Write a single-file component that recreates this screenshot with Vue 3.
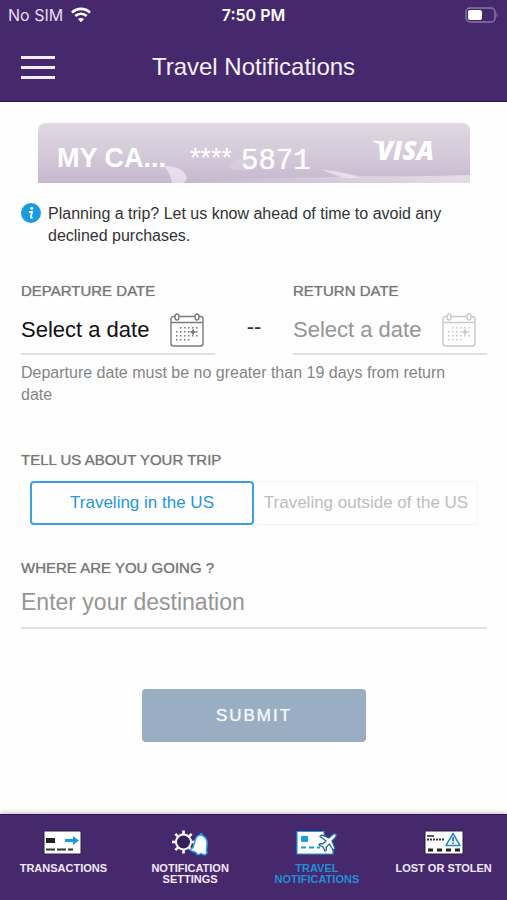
<script setup>
import { ref } from 'vue'

const scope = ref('domestic')
const departure = ref('')
const returning = ref('')
const destination = ref('')

const dots = []
for (let row = 0; row < 4; row++) {
  for (let col = 0; col < 6; col++) {
    if ((row === 0 && col === 0) || (row === 3 && col > 3)) continue
    dots.push({ x: 7 + col * 4, y: 15 + row * 4 })
  }
}

const dates = [
  { id: 'departure', label: 'DEPARTURE DATE', model: departure, active: true },
  { id: 'return', label: 'RETURN DATE', model: returning, active: false }
]
const scopes = [
  { id: 'domestic', label: 'Traveling in the US' },
  { id: 'abroad', label: 'Traveling outside of the US' }
]
const tabs = [
  { id: 'transactions', label: 'TRANSACTIONS' },
  { id: 'settings', label: 'NOTIFICATION SETTINGS' },
  { id: 'travel', label: 'TRAVEL NOTIFICATIONS' },
  { id: 'lost', label: 'LOST OR STOLEN' }
]
const teeth = [0, 45, 90, 135, 180, 225, 270, 315]
</script>

<template>
  <div class="app">
    <header class="top">
      <div class="status">
        <div class="carrier">
          <span>No SIM</span>
          <svg width="20" height="16" viewBox="0 0 20 16" fill="none" stroke="#fff" stroke-width="2.6">
            <path d="M1 5.6C6 .6 14 .6 19 5.6" />
            <path d="M4.3 9C7.500 5.900 12.500 5.900 15.700 9" />
            <path d="M10 15.300 6.900 12.100C8.700 10.500 11.300 10.500 13.100 12.100Z" fill="#fff" stroke="none" />
          </svg>
        </div>
        <span class="clock">7:50 PM</span>
        <svg class="battery" width="34" height="16" viewBox="0 0 34 16">
          <rect x="1" y="1" width="29" height="14" rx="4" fill="none" stroke="#8a76a6" stroke-width="1.500" />
          <rect x="3" y="3" width="14" height="10" rx="2" fill="#fff" />
          <path d="M31.500 5.500q2 2.500 0 5z" fill="#8a76a6" />
        </svg>
      </div>
      <div class="bar">
        <button class="menu" type="button" aria-label="Menu"><i></i><i></i><i></i></button>
        <h1>Travel Notifications</h1>
      </div>
    </header>

    <main>
      <section class="card">
        <svg class="art" viewBox="0 0 432 60" preserveAspectRatio="none" aria-hidden="true">
          <defs>
            <linearGradient id="glow" x1="0" x2="1">
              <stop offset="0" stop-color="#fff" stop-opacity="0" />
              <stop offset="1" stop-color="#fff" stop-opacity=".5" />
            </linearGradient>
          </defs>
          <path d="M126 43C137 43 147 46 149 55L146 60H134C133 53 130 47 126 43Z" fill="#fff" opacity=".5" />
          <path d="M190 45Q204 26 216 42L208 48Z" fill="#fff" opacity=".15" />
          <path d="M150 60Q240 53 310 54L285 47Q302 48 322 53Q370 54 432 52V60Z" fill="url(#glow)" />
          <path d="M282 46Q302 49 324 55L304 55Z" fill="#fff" opacity=".4" />
        </svg>
        <span class="name">MY CA...</span>
        <span class="stars">****</span>
        <span class="digits">5871</span>
        <span class="visa">
          <svg width="12" height="6" viewBox="0 0 12 6" aria-hidden="true"><path d="M0 0H7Q9 0 10 6Q7 2 0 1Z" fill="#fff" /></svg>VISA</span>
      </section>

      <p class="info">
        <svg width="20" height="20" viewBox="0 0 20 20" aria-hidden="true">
          <circle cx="10" cy="10" r="10" fill="#189bdf" />
          <circle cx="10.800" cy="5.200" r="1.500" fill="#fff" />
          <path d="M7.800 8.800H11L9.800 14.200Q9.700 15 11.600 14.400" fill="none" stroke="#fff" stroke-width="1.800" />
        </svg>
        <span>Planning a trip? Let us know ahead of time to avoid any declined purchases.</span>
      </p>

      <form @submit.prevent>
        <div class="dates">
          <template v-for="(d, i) in dates" :key="d.id">
            <span v-if="i" class="dash">--</span>
            <div class="field">
              <label class="label" :for="d.id">{{ d.label }}</label>
              <div class="line" :class="{ active: d.active }">
                <input :id="d.id" v-model="d.model.value" type="text" placeholder="Select a date" readonly />
                <button class="pick" type="button" :aria-label="d.label">
                  <svg width="34" height="34" viewBox="0 0 34 34" fill="none" stroke="currentColor" stroke-width="1.400">
                    <path d="M5 3.500H3.500Q1 3.500 1 6V30.500Q1 33 3.500 33H30.500Q33 33 33 30.500V6Q33 3.500 30.500 3.500H29M9 3.500H25M1 9.500H33" />
                    <ellipse cx="7" cy="4" rx="2" ry="3" />
                    <ellipse cx="27" cy="4" rx="2" ry="3" />
                    <g fill="currentColor" stroke="none">
                      <rect v-for="(p, n) in dots" :key="n" :x="p.x - 1" :y="p.y - 1" width="1.500" height="1.500" />
                    </g>
                    <path d="M23 16.500V21.500M20.500 19H25.500" stroke-width="2" />
                  </svg>
                </button>
              </div>
            </div>
          </template>
        </div>
        <p class="hint">Departure date must be no greater than 19 days from return date</p>

        <div id="trip" class="label trip">TELL US ABOUT YOUR TRIP</div>
        <div class="segments" role="group" aria-labelledby="trip">
          <button
            v-for="s in scopes" :key="s.id" type="button"
            :class="{ on: scope === s.id }" :aria-pressed="scope === s.id" @click="scope = s.id"
          >{{ s.label }}</button>
        </div>

        <label class="label where" for="destination">WHERE ARE YOU GOING ?</label>
        <div class="line destination">
          <input id="destination" v-model="destination" type="text" placeholder="Enter your destination" />
        </div>
        <button class="submit" type="submit">SUBMIT</button>
      </form>
    </main>

    <nav>
      <a v-for="t in tabs" :key="t.id" href="#" :class="{ current: t.id === 'travel' }">
        <svg v-if="t.id === 'transactions'" width="40" height="26" viewBox="0 0 40 26">
          <rect x="1" y="1" width="37" height="23" rx="1" fill="#fff" stroke="#292038" />
          <rect x="3" y="8" width="9" height="5" fill="#222" />
          <path d="M22 9H30V6L36 10.500 30 15V12H22Z" fill="#189bdf" />
          <path d="M3 19.500H12M14 19.500H23M25 19.500H30" stroke="#333" stroke-width="1.800" />
        </svg>
        <svg v-else-if="t.id === 'settings'" width="40" height="26" viewBox="0 0 40 26">
          <g fill="none" stroke="#fff">
            <circle cx="13.500" cy="12" r="7.500" stroke-width="2" />
            <path v-for="a in teeth" :key="a" d="M13.500 4V.5" stroke-width="2.600" :transform="`rotate(${a} 13.500 12)`" />
          </g>
          <circle cx="13.500" cy="12" r="6" fill="#35205b" />
          <path d="M31 5C25 5 25 12 23 17.500L20.500 19.500 22 21 26 22.500Q27 26 30.500 23.500L35 25 37 23 36.500 20C37.500 13 38 7 31 5Z" fill="#fff" stroke="#28a2e7" stroke-width="1.500" />
          <path d="M29 5.500 30.500 2.800 33 4 32.500 6.500" fill="#28a2e7" />
        </svg>
        <svg v-else-if="t.id === 'travel'" width="42" height="26" viewBox="0 0 42 26">
          <path d="M1 1.500H28V5L37 14V24H1Z" fill="#fff" stroke="#189bdf" stroke-width="1.200" />
          <rect x="5" y="6" width="7" height="6" rx="1" fill="#189bdf" />
          <path d="M5 17.500H10M13 17.500H18M21 17.500H24" stroke="#189bdf" stroke-width="2" />
          <path d="M40 4Q38 3 35 6L33 8 25.500 5 24 6.500 30 11 26.500 14 24 13.500 23 15 27 17 29 21 30.500 20 30 17.500 33.500 14 37 20 39 18.500 36 11 38 9Q41 6 40 4Z" fill="#fff" stroke="#24659f" stroke-width="1.300" />
        </svg>
        <svg v-else width="40" height="26" viewBox="0 0 40 26">
          <rect x="1" y="1" width="38" height="23" rx="1" fill="#fff" stroke="#292038" />
          <path d="M3 6H10" stroke="#222" stroke-width="1.500" />
          <path d="M3 9.500H20" stroke="#333" stroke-width="2" stroke-dasharray="2 1" />
          <path d="M4 20H36" stroke="#222" stroke-width="3" stroke-dasharray="5 4" />
          <path d="M29 3.500 36 15.500H22Z" fill="#fff" stroke="#1b8bd0" stroke-width="1.500" stroke-linejoin="round" />
          <path d="M29 7V11.500M29 12.500V14" stroke="#1b6cab" stroke-width="1.600" />
        </svg>
        <span>{{ t.label }}</span>
      </a>
    </nav>
  </div>
</template>

<style>
body {
  background: #fefefe;
}
</style>

<style scoped>
* {
  box-sizing: border-box;
}
.app {
  display: flex;
  flex-direction: column;
  min-height: 100vh;
  font-family: "Liberation Sans", Arial, sans-serif;
  color: #333;
}
button,
input {
  font: inherit;
  border: 0;
  padding: 0;
  background: none;
}
h1,
p {
  margin: 0;
}
.top {
  height: 102px;
  background: #46286c;
  border-bottom: 1px solid #32124f;
  color: #fff;
}
.status {
  display: grid;
  grid-template-columns: 1fr auto 1fr;
  align-items: center;
  height: 30px;
  padding: 0 8px;
  font-family: Inter, sans-serif;
  font-size: 16px;
}
.carrier {
  display: flex;
  align-items: center;
  gap: 8px;
  color: #e6dff0;
}
.clock {
  font-weight: 600;
}
.battery {
  justify-self: end;
}
.bar {
  display: grid;
  grid-template-columns: 34px 1fr 34px;
  align-items: center;
  padding: 0 21px;
  height: 74px;
}
.menu {
  display: grid;
  gap: 7px;
}
.menu i {
  height: 3px;
  background: #f3edf8;
}
h1 {
  font-size: 24px;
  font-weight: 400;
  line-height: 30px;
  text-align: center;
  color: #f6f0fa;
}
main {
  flex: 1;
  padding: 21px 20px 24px 21px;
}
.card {
  position: relative;
  display: flex;
  align-items: center;
  height: 60px;
  margin: 0 17px;
  padding: 10px 36px 0 19px;
  border-radius: 7px 7px 0 0;
  background: linear-gradient(#e0d9e2, #d2c7d8 60%, #c6b8cf);
  color: #fff;
  overflow: hidden;
}
.art {
  position: absolute;
  inset: 0;
  width: 100%;
  height: 100%;
}
.card span {
  position: relative;
}
.name {
  font-size: 27px;
  font-weight: 700;
}
.stars {
  margin-left: 24px;
  font-size: 27px;
  line-height: 27px;
}
.digits {
  margin-left: 9px;
  padding-top: 8px;
  font-family: "Liberation Mono", monospace;
  font-size: 29px;
  line-height: 30px;
  text-shadow: 0 0 1px #fff;
}
.visa {
  margin-left: auto;
  padding-bottom: 16px;
  font-family: "Open Sans", sans-serif;
  font-size: 26px;
  font-style: italic;
  font-weight: 800;
  line-height: 30px;
}
.visa svg {
  position: absolute;
  left: -4px;
  top: 6px;
}
.info {
  display: flex;
  gap: 7px;
  margin-top: 20px;
  font-size: 16px;
  line-height: 22px;
}
.info svg {
  flex: none;
}
.dates {
  display: grid;
  grid-template-columns: minmax(0, 1fr) 78px minmax(0, 1fr);
  margin-top: 34px;
}
.dash {
  padding-top: 34px;
  text-align: center;
  font-size: 22px;
  line-height: 24px;
}
.label {
  display: block;
  font-size: 15px;
  line-height: 20px;
  color: #777;
  text-shadow: 0 0 1px #999;
}
.line {
  display: flex;
  align-items: center;
  border-bottom: 2px solid #e0e0e0;
  font-size: 22px;
}
.field .line {
  height: 54px;
  padding: 6px 11px 0 0;
}
.line input {
  flex: 1;
  min-width: 0;
  height: 30px;
  outline: none;
}
.line input::placeholder {
  color: #959595;
  opacity: 1;
}
.line.active input::placeholder {
  color: #111;
}
.pick {
  display: flex;
  color: #c9c9c9;
}
.active .pick {
  color: #7c7c7c;
}
.hint {
  margin-top: 7px;
  padding-right: 20px;
  font-size: 16px;
  line-height: 22px;
  color: #858585;
}
.trip {
  margin-top: 44px;
}
.segments {
  display: grid;
  grid-template-columns: minmax(0, 1fr) minmax(0, 1fr);
  height: 44px;
  margin: 11px 9px 0;
}
.segments button {
  border: 1px solid #f5f5f5;
  border-radius: 4px;
  font-size: 17px;
  color: #bdbdbd;
  white-space: nowrap;
}
.segments .on {
  border: 2px solid #3b9fe0;
  color: #2496dc;
}
.where {
  margin-top: 33px;
}
.destination {
  height: 51px;
  font-size: 23px;
}
.submit {
  display: block;
  width: 48%;
  height: 53px;
  margin: 60px auto 0;
  border-radius: 4px;
  background: #9aaec3;
  color: #f2f7fc;
  font-size: 17px;
  letter-spacing: 2px;
  text-shadow: 0 0 1px #f2f7fc;
}
nav {
  display: grid;
  grid-template-columns: repeat(4, minmax(0, 1fr));
  min-height: 86px;
  padding-top: 15px;
  background: #46286c;
  border-top: 1px solid #32124f;
  box-shadow: 0 -1px 5px #bbb;
}
nav a {
  display: flex;
  flex-direction: column;
  align-items: center;
  gap: 7px;
  padding: 0 16px;
  color: #f3e9fa;
  font-size: 11px;
  font-weight: 700;
  line-height: 11px;
  text-align: center;
  text-decoration: none;
}
nav svg {
  flex: none;
}
nav a:last-child {
  white-space: nowrap;
}
nav .current {
  color: #218fd8;
}
</style>
